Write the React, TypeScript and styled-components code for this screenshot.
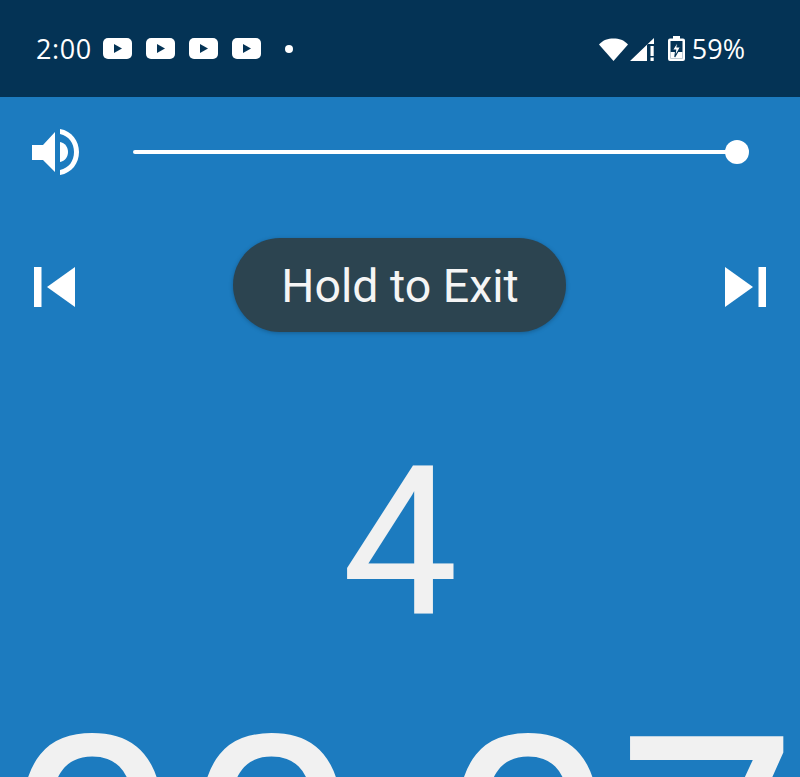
import React, { FC } from "react";
import styled, { createGlobalStyle } from "styled-components";

const GlobalStyle = createGlobalStyle`
  html, body {
    margin: 0;
    padding: 0;
    background: #1c7bbf;
  }
`;

const Screen = styled.div`
  width: 800px;
  height: 777px;
  overflow: hidden;
  background: #1c7bbf;
  display: flex;
  flex-direction: column;
  font-family: Roboto, "Liberation Sans", sans-serif;
  color: #fff;
`;

const StatusBar = styled.div`
  height: 97px;
  flex: none;
  background: #043355;
  display: flex;
  align-items: center;
  justify-content: space-between;
  padding: 0 55px 0 36px;
  font-family: "Open Sans", Roboto, sans-serif;
  font-size: 27px;
`;

const StatusGroup = styled.div`
  display: flex;
  align-items: center;
`;

const Time = styled.span`
  width: 56px;
  margin-right: 11px;
  white-space: nowrap;
  letter-spacing: 0.6px;
`;

const Notification = styled.svg`
  display: block;
  margin-right: 14px;
`;

const Dot = styled.span`
  width: 8px;
  height: 8px;
  border-radius: 50%;
  background: #fff;
  margin-left: 10px;
`;

const SignalSvg = styled.svg`
  margin-left: 2px;
`;

const BatterySvg = styled.svg`
  margin-left: 12px;
`;

const Percent = styled.span`
  margin-left: 7px;
`;

const VolumeRow = styled.div`
  display: flex;
  align-items: center;
  height: 46px;
  margin-top: 32px;
  padding: 0 63px 0 31px;
`;

const VolumeSvg = styled.svg`
  flex: none;
`;

const Slider = styled.div`
  position: relative;
  flex: 1;
  height: 4px;
  margin-left: 54px;
  background: #fff;
  border-radius: 2px;
`;

const Thumb = styled.span`
  position: absolute;
  right: -12px;
  top: -10px;
  width: 24px;
  height: 24px;
  border-radius: 50%;
  background: #fff;
`;

const ControlRow = styled.div`
  display: flex;
  align-items: center;
  justify-content: space-between;
  margin-top: 63px;
  padding: 0 34px;
`;

const SkipSvg = styled.svg<{ $flip?: boolean }>`
  flex: none;
  margin-top: 4px;
  transform: ${({ $flip }) => ($flip ? "scaleX(-1)" : "none")};
`;

const ExitPill = styled.div`
  width: 333px;
  height: 94px;
  margin-right: 2px;
  border-radius: 47px;
  background: #2c4450;
  box-shadow: 0 1px 4px rgba(0, 0, 0, 0.25);
  display: flex;
  align-items: center;
  justify-content: center;
  padding: 2px 0 0 2px;
  box-sizing: border-box;
  font-size: 46.5px;
  color: #f5f5f5;
`;

const Counter = styled.div`
  margin-top: 93px;
  text-align: center;
  font-size: 207px;
  line-height: 236px;
  color: #f1f1f1;
`;

const Clock = styled.div`
  margin-top: 3px;
  text-align: center;
  white-space: nowrap;
  font-size: 319px;
  line-height: 380px;
  color: #f1f1f1;
`;

const YoutubeIcon: FC = () => (
  <Notification width="29" height="21" viewBox="0 0 29 21">
    <rect width="29" height="21" rx="5" fill="#fff" />
    <path d="M11 6l8 4.500-8 4.500z" fill="#043355" />
  </Notification>
);

const WifiIcon: FC = () => (
  <svg width="29" height="24" viewBox="0 0 29 24">
    <path d="M0 7.500C4 3 9 1.500 14.500 1.500S25 3 29 7.500L14.500 24z" fill="#fff" />
  </svg>
);

const SignalIcon: FC = () => (
  <SignalSvg width="26" height="24" viewBox="0 0 26 24">
    <path d="M0 24L24 1v6h-7v17z" fill="#fff" />
    <path d="M20.500 9h3.200v10h-3.200zM20.500 20.500h3.200V24h-3.200z" fill="#fff" />
  </SignalSvg>
);

const BatteryIcon: FC = () => (
  <BatterySvg width="17" height="25" viewBox="0 0 17 25">
    <path
      fillRule="evenodd"
      d="M5 0h7v2.500h3a2 2 0 0 1 2 2V23a2 2 0 0 1-2 2H2a2 2 0 0 1-2-2V4.500a2 2 0 0 1 2-2h3zM2.500 5v17.500h12V5z"
      fill="#fff"
    />
    <path d="M2.500 16h12v6.500h-12z" fill="#fff" />
    <path
      d="M9.800 5.500L4.500 14h3.200l-.9 7 5.700-10H9z"
      fill="#fff"
      stroke="#043355"
      strokeWidth="1.100"
    />
  </BatterySvg>
);

const VolumeIcon: FC = () => (
  <VolumeSvg width="48" height="46" viewBox="0 0 48 46">
    <path d="M1 16h11L24 3v40L12 31H1z" fill="#fff" />
    <path d="M29 13C34 14 37 18 37 23S34 32 29 33z" fill="#fff" />
    <path d="M29 0C41 2 48 12 48 23S41 44 29 46v-5C38 39 43 32 43 23S38 7 29 5z" fill="#fff" />
  </VolumeSvg>
);

const SkipIcon: FC<{ flip?: boolean }> = ({ flip }) => (
  <SkipSvg width="41" height="40" viewBox="0 0 41 40" $flip={flip}>
    <path d="M0 0h7.500v40H0z" fill="#fff" />
    <path d="M13 20L41 0v40z" fill="#fff" />
  </SkipSvg>
);

const App: FC = () => (
  <Screen>
    <GlobalStyle />
    <StatusBar>
      <StatusGroup>
        <Time>2:00</Time>
        <YoutubeIcon />
        <YoutubeIcon />
        <YoutubeIcon />
        <YoutubeIcon />
        <Dot />
      </StatusGroup>
      <StatusGroup>
        <WifiIcon />
        <SignalIcon />
        <BatteryIcon />
        <Percent>59%</Percent>
      </StatusGroup>
    </StatusBar>
    <VolumeRow>
      <VolumeIcon />
      <Slider>
        <Thumb />
      </Slider>
    </VolumeRow>
    <ControlRow>
      <SkipIcon />
      <ExitPill>Hold to Exit</ExitPill>
      <SkipIcon flip />
    </ControlRow>
    <Counter>4</Counter>
    <Clock>00:07</Clock>
  </Screen>
);

export default App;
